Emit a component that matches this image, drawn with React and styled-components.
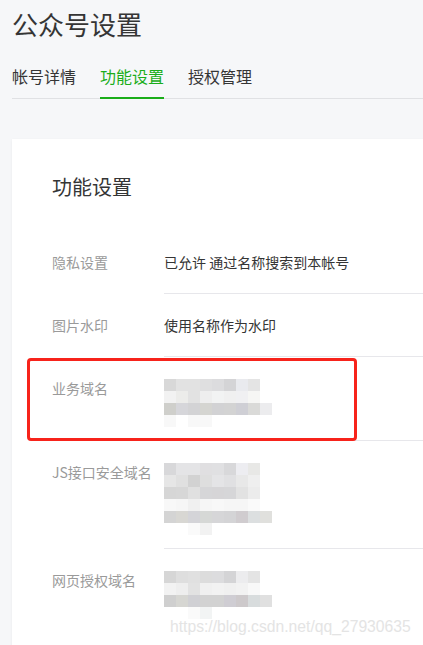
import React from "react";
import styled, { createGlobalStyle } from "styled-components";

const GlobalStyle = createGlobalStyle`
  html, body {
    margin: 0;
    padding: 0;
    background: #f6f7f9;
    overflow: hidden;
  }
  body {
    font-family: "Noto Sans CJK SC", "Noto Sans", sans-serif;
    color: #353535;
  }
`;

const Page = styled.div`
  padding: 6px 0 0 12px;
  box-sizing: border-box;
  position: relative;
  height: 645px;
  overflow: hidden;
`;

const PageTitle = styled.h1`
  margin: 0;
  font-size: 26px;
  line-height: 36px;
  font-weight: 400;
  color: #353535;
`;

const TabBar = styled.nav`
  display: flex;
  gap: 24px;
  margin-top: 22px;
  border-bottom: 1px solid #e0e1e4;
`;

const Tab = styled.div`
  font-size: 16px;
  line-height: 24px;
  padding-bottom: 9px;
  margin-bottom: -1px;
  border-bottom: 2px solid ${(p) => (p.$active ? "#1aad19" : "transparent")};
  color: ${(p) => (p.$active ? "#1aad19" : "#353535")};
`;

const Card = styled.section`
  margin: 40px -20px 0 0;
  background: #fff;
  padding: 34px 0 0 40px;
  box-shadow: 0 1px 3px rgba(0, 0, 0, 0.06);
  height: 500px;
`;

const CardTitle = styled.h2`
  margin: 0 0 30px;
  font-size: 20px;
  line-height: 28px;
  font-weight: 400;
  color: #353535;
`;

const Row = styled.div`
  display: flex;
  position: relative;
`;

const Label = styled.div`
  width: 112px;
  flex: none;
  padding-top: 21px;
  font-size: 14px;
  line-height: 20px;
  color: #9a9a9a;
`;

const Value = styled.div`
  flex: 1;
  font-size: 14px;
  line-height: 20px;
  color: #353535;
  padding: 21px 0 ${(p) => (p.$mosaic ? "13px" : "21px")};
  border-bottom: 1px solid ${(p) => (p.$last ? "transparent" : "#e7e7eb")};
`;

const Mosaic = styled.div`
  display: flex;
  flex-direction: column;
  margin-top: 1px;
`;

const MosaicLine = styled.div`
  display: flex;
  height: 12px;
`;

const Pixel = styled.span`
  width: 12px;
  height: 12px;
  background: ${(p) => p.$c};
`;

const Annotation = styled.div`
  position: absolute;
  left: -25px;
  top: 1px;
  width: 330px;
  height: 83px;
  box-sizing: border-box;
  border: 3px solid #f7231b;
  border-radius: 4px;
  pointer-events: none;
`;

const Watermark = styled.div`
  position: absolute;
  left: 170px;
  top: 617px;
  font-family: "Liberation Sans", Arial, sans-serif;
  font-size: 15.7px;
  line-height: 20px;
  color: #e4e4e4;
  white-space: nowrap;
`;

const businessMosaic = [
  ["#d8d8d8", "#e2e2e2", "#e2e2e2", "#dfdfe0", "#dcdcde", "#d4d4d6", "#e9eaee", "#e4e4e4"],
  ["#f2f2f2", "#ececea", "#e2e2e2", "#eeeeee", "#f2f3f3", "#f0f0f0", "#f0f0f2", "#f6f6f4"],
  ["#cfcfcb", "#d6d6da", "#d3d3d5", "#d5d5d1", "#d2d2d4", "#d3d3d3", "#cfcfd5", "#dadad8", "#ececee"],
  ["#f8f8f8", "#ffffff", "#f8f8f8", "#f8f8f8"],
];

const jsMosaic = [
  ["#d8d8da", "#e4e4e6", "#e4e4e6", "#e0dfe1", "#e0e0e2", "#d8d8da", "#ededf1", "#e8e8e6"],
  ["#e6e6e6", "#e0e0e0", "#d2d2d2", "#dedede", "#e4e4e6", "#e0e0e2", "#e8e8e8", "#efefef"],
  ["#d6d6d6", "#d7d7d7", "#e0e0e0", "#d6d6d8", "#d6d5d7", "#d6d6d8", "#e2e2e2", "#ececec"],
  ["#f8f8f8", "#f6f6f6", "#f0f0f0", "#f6f6f6", "#f8f8f8", "#f6f6f6", "#f6f6f6", "#fafafa"],
  ["#d4d4d4", "#d8d7d3", "#d4d4d8", "#d6d8d6", "#d6d6d8", "#d4d4d6", "#d0cccf", "#dcdfe0", "#e0e0dd"],
  ["#ffffff", "#ffffff", "#fafafa", "#f2f2f2"],
];

const webMosaic = [
  ["#d6d6d6", "#dedede", "#e0e0e0", "#dcdcdc", "#dcdcde", "#d4d4d6", "#ececee", "#e4e4e4"],
  ["#f2f2f2", "#eeeeee", "#e2e2e2", "#f0f0f0", "#f2f2f2", "#f0f0f0", "#f2f2f2", "#f8f8f8"],
  ["#cfcfcf", "#d6d6d2", "#d0d0d4", "#d2d2d2", "#d2d2d2", "#cfcdd3", "#cdc9cb", "#d8dcdd", "#e0e0e0"],
  ["#ffffff", "#ffffff", "#fafafa", "#f2f4f4"],
];

function Blur({ data }) {
  return (
    <Mosaic>
      {data.map((line, i) => (
        <MosaicLine key={i}>
          {line.map((c, j) => (
            <Pixel key={j} $c={c} />
          ))}
        </MosaicLine>
      ))}
    </Mosaic>
  );
}

export default function App() {
  return (
    <>
      <GlobalStyle />
      <Page>
        <PageTitle>公众号设置</PageTitle>
        <TabBar>
          <Tab>帐号详情</Tab>
          <Tab $active>功能设置</Tab>
          <Tab>授权管理</Tab>
        </TabBar>
        <Card>
          <CardTitle>功能设置</CardTitle>
          <Row>
            <Label>隐私设置</Label>
            <Value>已允许 通过名称搜索到本帐号</Value>
          </Row>
          <Row>
            <Label>图片水印</Label>
            <Value>使用名称作为水印</Value>
          </Row>
          <Row>
            <Label>业务域名</Label>
            <Value $mosaic>
              <Blur data={businessMosaic} />
            </Value>
            <Annotation />
          </Row>
          <Row>
            <Label>JS接口安全域名</Label>
            <Value $mosaic>
              <Blur data={jsMosaic} />
            </Value>
          </Row>
          <Row>
            <Label>网页授权域名</Label>
            <Value $mosaic $last>
              <Blur data={webMosaic} />
            </Value>
          </Row>
        </Card>
        <Watermark>https://blog.csdn.net/qq_27930635</Watermark>
      </Page>
    </>
  );
}
